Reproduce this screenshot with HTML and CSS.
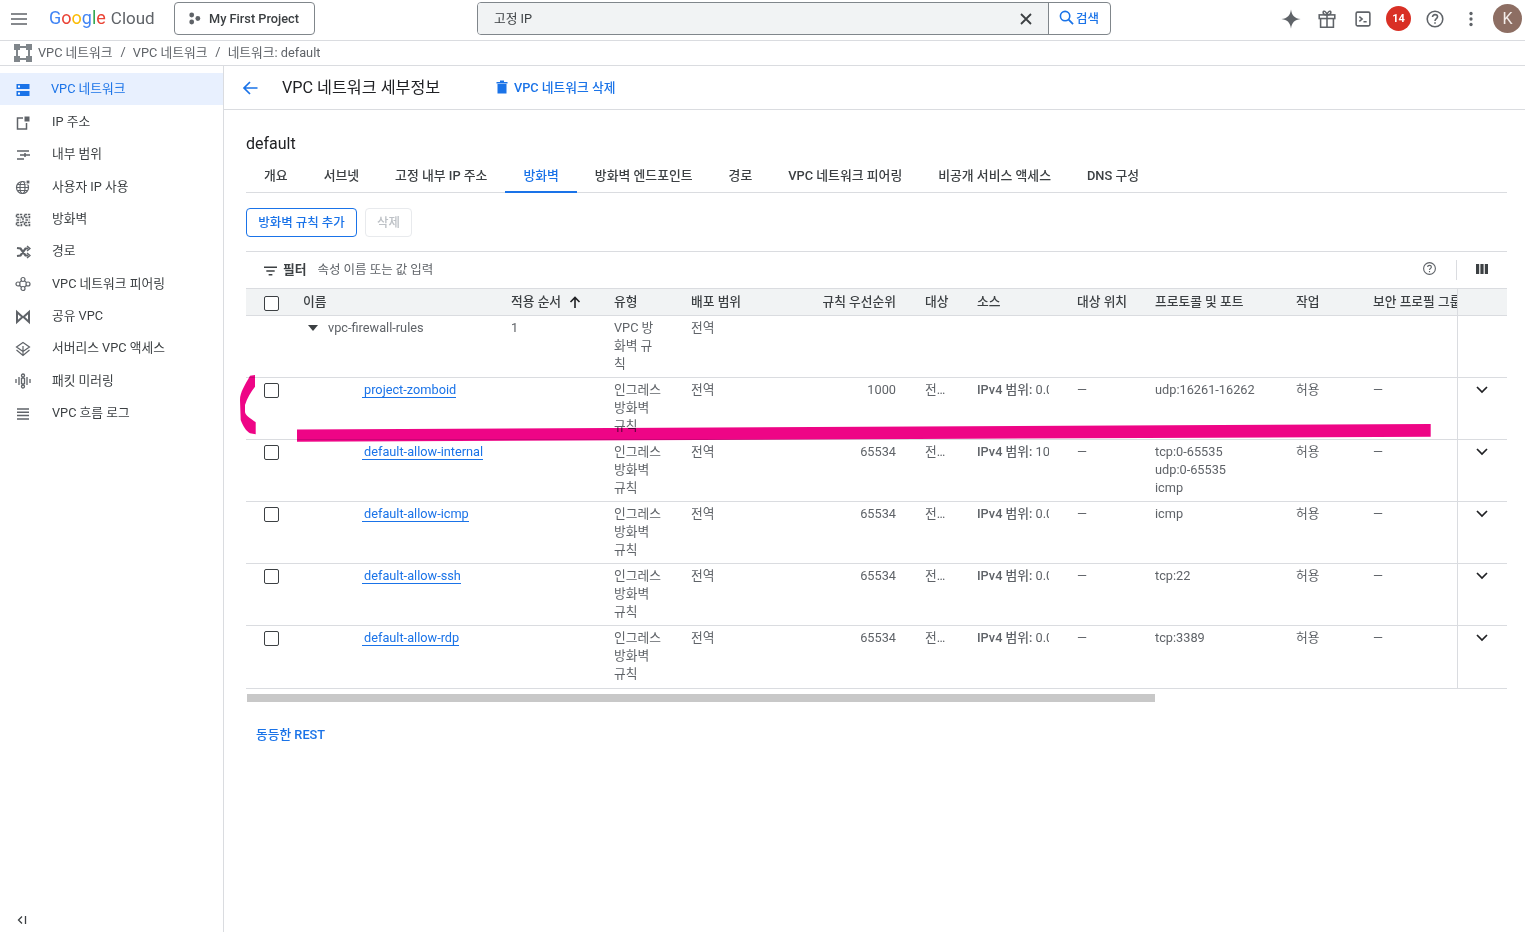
FILE: index.html
```html
<!DOCTYPE html>
<html lang="ko">
<head>
<meta charset="utf-8">
<title>VPC 네트워크 세부정보</title>
<link rel="stylesheet" href="styles.css">
</head>
<body>
<div class="app">
  <header class="topbar">
    <svg class="menu-icon" viewBox="0 0 16 12"><path d="M0 1h16M0 6h16M0 11h16" stroke="#5f6368" stroke-width="1.6" fill="none"/></svg>
    <div class="logo"><span class="g-b">G</span><span class="g-r">o</span><span class="g-y">o</span><span class="g-b">g</span><span class="g-g">l</span><span class="g-r">e</span><span class="g-c">Cloud</span></div>
    <button class="project"><svg class="project-icon" viewBox="0 0 14 14"><circle cx="4" cy="3.2" r="2.6" fill="#5f6368"/><circle cx="10.6" cy="7" r="2.6" fill="#5f6368"/><circle cx="4" cy="10.8" r="2.6" fill="#5f6368"/></svg>My First Project</button>
    <div class="search">
      <div class="search-field"><span class="search-text">고정 IP</span><svg class="search-x" viewBox="0 0 12 12"><path d="M1 1l10 10M11 1L1 11" stroke="#3c4043" stroke-width="1.8" fill="none"/></svg></div>
      <div class="search-btn"><svg class="search-glass" viewBox="0 0 16 16"><circle cx="6.5" cy="6.5" r="5" stroke="#1a73e8" stroke-width="1.7" fill="none"/><path d="M10 10l5 5" stroke="#1a73e8" stroke-width="1.9"/></svg>검색</div>
    </div>
    <div class="top-actions">
      <svg class="ti" viewBox="0 0 24 24"><path d="M12 1.5C12.8 8 16 11.2 22.5 12 16 12.8 12.8 16 12 22.5 11.2 16 8 12.8 1.5 12 8 11.2 11.2 8 12 1.5Z" fill="#5f6368"/></svg>
      <svg class="ti" viewBox="0 0 24 24" fill="none" stroke="#5f6368" stroke-width="1.7"><rect x="3.5" y="7.5" width="17" height="4"/><path d="M5 11.5V21h14v-9.500M12 7.500V21M12 7.500C9 7.500 7.500 6 7.800 4.500 8.200 2.800 11 3 12 7.500ZM12 7.500C15 7.500 16.500 6 16.200 4.500 15.800 2.800 13 3 12 7.500Z"/></svg>
      <svg class="ti" viewBox="0 0 24 24" fill="none" stroke="#5f6368" stroke-width="1.7"><rect x="4.500" y="4.500" width="15" height="15" rx="1.500"/><path d="M8 9.500l3 2.500-3 2.500M12.500 15H16"/></svg>
      <span class="badge">14</span>
      <svg class="ti" viewBox="0 0 24 24" fill="none" stroke="#5f6368" stroke-width="1.700"><circle cx="12" cy="12" r="8.500"/><path d="M9.300 9.800C9.300 8.200 10.500 7.200 12 7.200c1.600 0 2.800 1 2.800 2.400 0 2-2.800 2.200-2.800 4.600"/><path d="M12 15.500v1.800"/></svg>
      <svg class="ti" viewBox="0 0 24 24"><circle cx="12" cy="6" r="1.800" fill="#5f6368"/><circle cx="12" cy="12" r="1.800" fill="#5f6368"/><circle cx="12" cy="18" r="1.800" fill="#5f6368"/></svg>
      <span class="avatar">K</span>
    </div>
  </header>

  <nav class="crumbs">
    <svg class="crumb-icon" viewBox="0 0 18 18"><path d="M3 3h12v12H3z" fill="none" stroke="#80868b" stroke-width="2"/><path d="M0 0h6v6H0zM12 0h6v6h-6zM0 12h6v6H0zM12 12h6v6h-6z" fill="#80868b"/></svg>
    <span>VPC 네트워크</span><span class="sep">/</span><span>VPC 네트워크</span><span class="sep">/</span><span>네트워크: default</span>
  </nav>

  <div class="body">
    <aside class="sidebar">
      <div class="side-list">
        <div class="side-item active"><svg class="si" viewBox="0 0 16 16"><path d="M1.500 2h13v5h-13zM1.500 9h13v5h-13z" fill="#1a73e8"/><rect x="3" y="3.500" width="2" height="2" fill="#fff"/><rect x="3" y="10.500" width="2" height="2" fill="#fff"/></svg>VPC 네트워크</div>
        <div class="side-item"><svg class="si" viewBox="0 0 16 16"><path d="M8 3H2.500v11h9V8" fill="none" stroke="#5f6368" stroke-width="1.500"/><path d="M9.500 1.500h5v5h-5z" fill="#5f6368"/></svg>IP 주소</div>
        <div class="side-item"><svg class="si" viewBox="0 0 16 16"><path d="M2 4h12M5 8h10M2 12h7" stroke="#5f6368" stroke-width="1.500" fill="none"/><path d="M10 6v4" stroke="#5f6368" stroke-width="1.500"/></svg>내부 범위</div>
        <div class="side-item"><svg class="si" viewBox="0 0 16 16" fill="none" stroke="#5f6368" stroke-width="1.200"><circle cx="7.500" cy="8.500" r="6"/><ellipse cx="7.500" cy="8.500" rx="2.500" ry="6"/><path d="M1.500 8.500h12M2.500 5.500h10M2.500 11.500h10"/><rect x="11" y="1" width="4" height="4" fill="#5f6368" stroke="#fff"/></svg>사용자 IP 사용</div>
        <div class="side-item"><svg class="si" viewBox="0 0 16 16" fill="none" stroke="#5f6368" stroke-width="1.500"><path d="M1.500 2.500h5v3h-5zM9.500 2.500h5v3h-5zM1.500 10.500h5v3h-5zM9.500 10.500h5v3h-5zM1.500 8h4M10.500 8h4M8 5.500v5" stroke-dasharray="2.500 .8"/></svg>방화벽</div>
        <div class="side-item"><svg class="si" viewBox="0 0 16 16" fill="none" stroke="#5f6368" stroke-width="2.200"><path d="M2 4l3.500.5 5 7h3M2 12l3.500-.5 5-7h3"/><path d="M12 2l3 2.500-3 2.500M12 9l3 2.500-3 2.500" stroke-width="1.400"/></svg>경로</div>
        <div class="side-item"><svg class="si" viewBox="0 0 16 16" fill="none" stroke="#5f6368" stroke-width="1.200"><circle cx="8" cy="3.500" r="2"/><circle cx="3" cy="8" r="2"/><circle cx="13" cy="8" r="2"/><circle cx="8" cy="12.500" r="2"/><path d="M6.500 5L4.500 6.500M9.500 5l2 1.500M4.500 9.500l2 1.500M11.500 9.500l-2 1.500"/></svg>VPC 네트워크 피어링</div>
        <div class="side-item"><svg class="si" viewBox="0 0 16 16" fill="#5f6368" stroke="#5f6368" stroke-width="1.300"><path d="M2 3l5.500 5L2 13zM14 3L8.500 8l5.500 5z" fill="none" stroke-width="2"/></svg>공유 VPC</div>
        <div class="side-item"><svg class="si" viewBox="0 0 16 16" fill="none" stroke="#5f6368" stroke-width="1.200"><path d="M8 1.500L14.500 6 8 10.500 1.500 6zM1.500 9L8 14.500 14.500 9M8 5v9"/></svg>서버리스 VPC 액세스</div>
        <div class="side-item"><svg class="si" viewBox="0 0 16 16" fill="none" stroke="#5f6368" stroke-width="1.300"><path d="M1 6v4M4 4v8M12 4v8M15 6v4"/><circle cx="8" cy="2.500" r="1.500"/><circle cx="8" cy="13.500" r="1.500"/><path d="M6.500 5v6M9.500 5v6M6.500 5h3M6.500 11h3"/></svg>패킷 미러링</div>
        <div class="side-item"><svg class="si" viewBox="0 0 16 16"><path d="M2 3h12M2 6.300h12M2 9.600h12M2 13h12" stroke="#5f6368" stroke-width="1.500" fill="none"/></svg>VPC 흐름 로그</div>
      </div>
      <div class="collapse"><svg class="collapse-icon" viewBox="0 0 10 10"><path d="M5 1.500L1.500 5 5 8.500" fill="none" stroke="#3c4043" stroke-width="1.300"/><path d="M8.500 1v8" stroke="#3c4043" stroke-width="1.300"/></svg></div>
    </aside>

    <main class="main">
      <div class="page-head">
        <svg class="back" viewBox="0 0 16 16"><path d="M15.500 8H2M8 2L2 8l6 6" fill="none" stroke="#1a73e8" stroke-width="1.700"/></svg>
        <h1 class="page-title">VPC 네트워크 세부정보</h1>
        <div class="del-link"><svg class="trash" viewBox="0 0 12 14"><path d="M0.500 2h11v1.500H.5zM4 .5h4V2H4zM1.500 4h9v9.500h-9z" fill="#1a73e8"/></svg>VPC 네트워크 삭제</div>
      </div>
      <div class="content">
        <h2 class="net-name">default</h2>
        <div class="tabs">
          <div class="tab">개요</div><div class="tab">서브넷</div><div class="tab">고정 내부 IP 주소</div><div class="tab on">방화벽</div><div class="tab">방화벽 엔드포인트</div><div class="tab">경로</div><div class="tab">VPC 네트워크 피어링</div><div class="tab">비공개 서비스 액세스</div><div class="tab">DNS 구성</div>
        </div>
        <div class="actions">
          <button class="btn primary">방화벽 규칙 추가</button>
          <button class="btn disabled">삭제</button>
        </div>
        <div class="filter">
          <svg class="filter-icon" viewBox="0 0 14 10"><path d="M0 1h14M2.500 5h9M5 9h4" stroke="#3c4043" stroke-width="1.500" fill="none"/></svg>
          <span class="filter-label">필터</span>
          <span class="filter-ph">속성 이름 또는 값 입력</span>
          <svg class="filter-help" viewBox="0 0 16 16" fill="none" stroke="#5f6368" stroke-width="1.200"><circle cx="8" cy="8" r="6.300"/><path d="M6 6.500C6 5.300 6.900 4.600 8 4.600s2 .7 2 1.700c0 1.500-2 1.600-2 3.300M8 10.700v1.300"/></svg>
          <span class="filter-div"></span>
          <svg class="cols" viewBox="0 0 12 10"><path d="M0 0h3.200v10H0zM4.400 0h3.200v10H4.400zM8.800 0H12v10H8.800z" fill="#3c4043"/></svg>
        </div>

        <div class="table">
          <div class="row head">
            <div class="cell"><span class="check"></span></div>
            <div class="cell">이름</div>
            <div class="cell">적용 순서<svg class="sort" viewBox="0 0 12 12"><path d="M6 12V1.500M1.500 6L6 1.500 10.500 6" fill="none" stroke="#202124" stroke-width="1.600"/></svg></div>
            <div class="cell">유형</div>
            <div class="cell">배포 범위</div>
            <div class="cell right">규칙 우선순위</div>
            <div class="cell">대상</div>
            <div class="cell">소스</div>
            <div class="cell">대상 위치</div>
            <div class="cell">프로토콜 및 포트</div>
            <div class="cell">작업</div>
            <div class="cell clip">보안 프로필 그룹</div>
            <div class="cell sticky"></div>
          </div>

          <div class="row group">
            <div class="cell"></div>
            <div class="cell"><span class="tri"></span>vpc-firewall-rules</div>
            <div class="cell">1</div>
            <div class="cell type">VPC 방화벽 규칙</div>
            <div class="cell">전역</div>
            <div class="cell"></div><div class="cell"></div><div class="cell"></div><div class="cell"></div><div class="cell"></div><div class="cell"></div><div class="cell"></div>
            <div class="cell sticky"></div>
          </div>

          <div class="row">
            <div class="cell"><span class="check"></span></div>
            <div class="cell"><a class="link">project-zomboid</a></div>
            <div class="cell"></div>
            <div class="cell type">인그레스 방화벽 규칙</div>
            <div class="cell">전역</div>
            <div class="cell right">1000</div>
            <div class="cell target">전체에 적용</div>
            <div class="cell source"><b>IPv4 범위:</b> 0.0.0.0/0</div>
            <div class="cell">—</div>
            <div class="cell proto">udp:16261-16262</div>
            <div class="cell">허용</div>
            <div class="cell">—</div>
            <div class="cell sticky"><svg class="chev" viewBox="0 0 12 8"><path d="M1 1l5 5 5-5" fill="none" stroke="#202124" stroke-width="1.700"/></svg></div>
          </div>

          <div class="row">
            <div class="cell"><span class="check"></span></div>
            <div class="cell"><a class="link">default-allow-internal</a></div>
            <div class="cell"></div>
            <div class="cell type">인그레스 방화벽 규칙</div>
            <div class="cell">전역</div>
            <div class="cell right">65534</div>
            <div class="cell target">전체에 적용</div>
            <div class="cell source"><b>IPv4 범위:</b> 10.128.0.0/9</div>
            <div class="cell">—</div>
            <div class="cell proto">tcp:0-65535<br>udp:0-65535<br>icmp</div>
            <div class="cell">허용</div>
            <div class="cell">—</div>
            <div class="cell sticky"><svg class="chev" viewBox="0 0 12 8"><path d="M1 1l5 5 5-5" fill="none" stroke="#202124" stroke-width="1.700"/></svg></div>
          </div>

          <div class="row">
            <div class="cell"><span class="check"></span></div>
            <div class="cell"><a class="link">default-allow-icmp</a></div>
            <div class="cell"></div>
            <div class="cell type">인그레스 방화벽 규칙</div>
            <div class="cell">전역</div>
            <div class="cell right">65534</div>
            <div class="cell target">전체에 적용</div>
            <div class="cell source"><b>IPv4 범위:</b> 0.0.0.0/0</div>
            <div class="cell">—</div>
            <div class="cell proto">icmp</div>
            <div class="cell">허용</div>
            <div class="cell">—</div>
            <div class="cell sticky"><svg class="chev" viewBox="0 0 12 8"><path d="M1 1l5 5 5-5" fill="none" stroke="#202124" stroke-width="1.700"/></svg></div>
          </div>

          <div class="row">
            <div class="cell"><span class="check"></span></div>
            <div class="cell"><a class="link">default-allow-ssh</a></div>
            <div class="cell"></div>
            <div class="cell type">인그레스 방화벽 규칙</div>
            <div class="cell">전역</div>
            <div class="cell right">65534</div>
            <div class="cell target">전체에 적용</div>
            <div class="cell source"><b>IPv4 범위:</b> 0.0.0.0/0</div>
            <div class="cell">—</div>
            <div class="cell proto">tcp:22</div>
            <div class="cell">허용</div>
            <div class="cell">—</div>
            <div class="cell sticky"><svg class="chev" viewBox="0 0 12 8"><path d="M1 1l5 5 5-5" fill="none" stroke="#202124" stroke-width="1.700"/></svg></div>
          </div>

          <div class="row">
            <div class="cell"><span class="check"></span></div>
            <div class="cell"><a class="link">default-allow-rdp</a></div>
            <div class="cell"></div>
            <div class="cell type">인그레스 방화벽 규칙</div>
            <div class="cell">전역</div>
            <div class="cell right">65534</div>
            <div class="cell target">전체에 적용</div>
            <div class="cell source"><b>IPv4 범위:</b> 0.0.0.0/0</div>
            <div class="cell">—</div>
            <div class="cell proto">tcp:3389</div>
            <div class="cell">허용</div>
            <div class="cell">—</div>
            <div class="cell sticky"><svg class="chev" viewBox="0 0 12 8"><path d="M1 1l5 5 5-5" fill="none" stroke="#202124" stroke-width="1.700"/></svg></div>
          </div>
        </div>

        <div class="hscroll"><div class="thumb"></div></div>
        <a class="rest">동등한 REST</a>
      </div>
    </main>
  </div>
  <svg class="scribble" viewBox="0 0 1525 932"><path d="M297 429.500L1430.700 424V436.700L297 441.700Z" fill="#ee0586"/><path d="M255 375L250 375.700C245 385 240 392 240 400L240.700 420C243 426 246 431 250 433.300L255.700 434.300V422.300C250 418 245 415 245 411.700V405C247 398 251 392 255 386.700Z" fill="#ee0586"/></svg>
</div>
</body>
</html>
```

FILE: styles.css
```css
* { box-sizing: border-box; }
html, body { margin: 0; padding: 0; height: 100%; }
body {
  font-family: Roboto, "Noto Sans CJK KR", sans-serif;
  font-size: 12.75px;
  color: #3c4043;
  background: #fff;
  overflow: hidden;
}
.app { position: relative; display: flex; flex-direction: column; height: 932px; width: 1525px; overflow: hidden; }

/* top bar */
.topbar { display: flex; align-items: center; height: 41px; flex: none; border-bottom: 1px solid #dadce0; padding-left: 11px; }
.menu-icon { width: 16px; height: 12px; flex: none; margin-top: -3px; }
.logo { margin-left: 22px; width: 125px; font-size: 18px; line-height: 24px; margin-top: -4px; white-space: nowrap; }
.g-b { color: #4285f4; } .g-r { color: #ea4335; } .g-y { color: #fbbc04; } .g-g { color: #34a853; }
.g-c { color: #5f6368; margin-left: 5px; font-size: 17px; }
.project { display: flex; align-items: center; width: 141px; height: 33px; margin-top: -3px; border: 1px solid #80868b; border-radius: 4px; background: #fff; padding: 0 0 0 13px; font: 500 12.75px Roboto, "Noto Sans CJK KR", sans-serif; color: #3c4043; }
.project-icon { width: 13px; height: 13px; margin-right: 8px; }
.search { display: flex; margin-left: 162px; width: 634px; height: 33px; margin-top: -3px; border: 1px solid #80868b; border-radius: 4px; overflow: hidden; }
.search-field { flex: 1; display: flex; align-items: center; justify-content: space-between; background: #f1f3f4; padding: 0 16px 0 16px; border-right: 1px solid #80868b; }
.search-text { color: #3c4043; padding-bottom: 2px; }
.search-x { width: 12px; height: 12px; }
.search-btn { display: flex; align-items: center; width: 61px; padding-left: 10px; color: #1a73e8; font-weight: 500; font-size: 12.5px; padding-bottom: 2px; }
.search-glass { width: 15px; height: 15px; margin-right: 2px; }
.top-actions { display: flex; align-items: center; margin-left: auto; margin-top: -3px; padding-right: 3px; }
.ti { width: 22px; height: 22px; flex: none; margin-right: 14px; }
.badge { width: 25px; height: 25px; border-radius: 50%; background: #d93025; color: #fff; font-weight: 700; font-size: 11px; display: flex; align-items: center; justify-content: center; margin-right: 13px; margin-left: -2px; flex: none; }
.avatar { width: 29px; height: 29px; border-radius: 50%; background: #8d6e63; color: #f3ece9; font-size: 16px; display: flex; align-items: center; justify-content: center; flex: none; margin-left: -3px; }

/* breadcrumbs */
.crumbs { display: flex; align-items: center; height: 25px; flex: none; border-bottom: 1px solid #dadce0; padding: 0 0 3px 14px; color: #5f6368; }
.crumb-icon { width: 18px; height: 18px; margin: 2px 6px 0 0; }
.sep { margin: 0 7px 0 8px; }

/* body */
.body { display: flex; flex: 1; min-height: 0; }
.sidebar { width: 224px; flex: none; border-right: 1px solid #dadce0; display: flex; flex-direction: column; padding-top: 7px; }
.side-list { flex: 1; }
.side-item { display: flex; align-items: center; height: 32.35px; padding: 0 0 2px 15px; color: #3c4043; }
.side-item.active { background: #e8f0fe; color: #1a73e8; padding-bottom: 3px; }
.si { width: 16px; height: 16px; margin: 4px 21px 0 0; flex: none; }
.active .si { margin: 5px 20px 0 0; }
.collapse { height: 17px; padding-left: 17px; }
.collapse-icon { width: 10px; height: 10px; display: block; }

.main { flex: 1; min-width: 0; display: flex; flex-direction: column; }
.page-head { display: flex; align-items: center; height: 44px; flex: none; border-bottom: 1px solid #dadce0; padding: 0 0 1px 18px; }
.back { width: 16px; height: 16px; margin-right: 24px; margin-top: 1px; }
.page-title { margin: 0 56px 0 0; font-size: 16.2px; font-weight: 400; color: #202124; width: 158px; white-space: nowrap; padding-bottom: 2px; }
.del-link { display: flex; align-items: center; color: #1a73e8; font-weight: 500; padding-bottom: 2px; }
.trash { width: 12px; height: 14px; margin: 2px 6px 0 0; }

.content { padding: 0 18px 0 22px; }
.net-name { margin: 24px 0 0; font-size: 16px; font-weight: 400; line-height: 20px; color: #202124; }
.tabs { display: flex; height: 39px; border-bottom: 1px solid #dadce0; }
.tab { padding: 2px 18px 0; height: 39px; display: flex; align-items: center; color: #3c4043; white-space: nowrap; font-weight: 500; font-size: 12.85px; }
.tab.on { color: #1a73e8; border-bottom: 2px solid #1a73e8; padding-top: 4px; }

.actions { display: flex; gap: 8px; padding: 15px 0 14px; border-bottom: 1px solid #dadce0; }
.btn { height: 29px; border-radius: 4px; background: #fff; font: 500 12.5px Roboto, "Noto Sans CJK KR", sans-serif; padding: 0 0 2px; }
.btn.primary { width: 111px; border: 1px solid #1a73e8; color: #1a73e8; }
.btn.disabled { width: 47px; border: 1px solid #e8eaed; color: #bdc1c6; }

.filter { display: flex; align-items: center; height: 36px; padding: 0 0 3px 18px; }
.filter-icon { width: 13px; height: 10px; margin-right: 6px; margin-top: 4px; }
.filter-label { font-weight: 700; color: #3c4043; margin-right: 11px; }
.filter-ph { color: #5f6368; font-size: 12.5px; }
.filter-help { width: 15px; height: 15px; margin-left: auto; }
.filter-div { width: 1px; height: 20px; background: #dadce0; margin: 2px 19px 0 19px; }
.cols { width: 12px; height: 10px; margin-right: 19px; }

.table { border-top: 1px solid #dadce0; }
.row {
  display: grid;
  grid-template-columns: 49px 208px 103px 77px 77px 157px 52px 100px 78px 141px 77px 92px 50px;
  height: 62.2px;
  border-bottom: 1px solid #dadce0;
  color: #5f6368;
  line-height: 18px;
}
.row.head { height: 27px; background: #f1f3f4; color: #3c4043; font-weight: 500; }
.row.group { height: 61.6px; }
.cell { padding: 3px 8px 0; min-width: 0; }
.head .cell { padding-top: 4px; white-space: nowrap; display: flex; align-items: flex-start; overflow: hidden; }
.right { text-align: right; padding-right: 21px; }
.head .right { justify-content: flex-end; }
.clip { padding-right: 0; }
.type { padding-right: 21px; }
.target { padding-right: 24px; white-space: nowrap; overflow: hidden; text-overflow: ellipsis; }
.source { padding-right: 0; margin-right: 20px; white-space: nowrap; overflow: hidden; text-overflow: clip; }
.source b { font-weight: 500; }
.sticky { border-left: 1px solid #dadce0; padding: 8px 0 0 18px; }
.head .sticky { padding: 0; }
.check { display: block; width: 15px; height: 15px; margin: 2px 0 0 10px; border: 1.5px solid #3c4043; border-radius: 2px; background: #fff; }
.head .check { margin-top: 3px; }
.sort { width: 12px; height: 12px; margin: 3px 0 0 8px; flex: none; }
.tri { display: inline-block; width: 0; height: 0; border-left: 5.5px solid transparent; border-right: 5.5px solid transparent; border-top: 6px solid #3c4043; margin: 0 10px 1px 5px; }
.link { color: #1a73e8; border-bottom: 1px solid #1a73e8; margin-left: 59px; padding-left: 2px; }
.chev { display: block; width: 12px; height: 8px; }

.hscroll { height: 8px; margin-top: 5px; margin-left: 1px; }
.thumb { width: 908px; height: 8px; background: #c8c8c8; }
.rest { display: block; margin: 24px 0 0 10px; color: #1a73e8; font-weight: 500; line-height: 18px; }

.scribble { position: absolute; left: 0; top: 0; width: 1525px; height: 932px; pointer-events: none; mix-blend-mode: multiply; }
```
